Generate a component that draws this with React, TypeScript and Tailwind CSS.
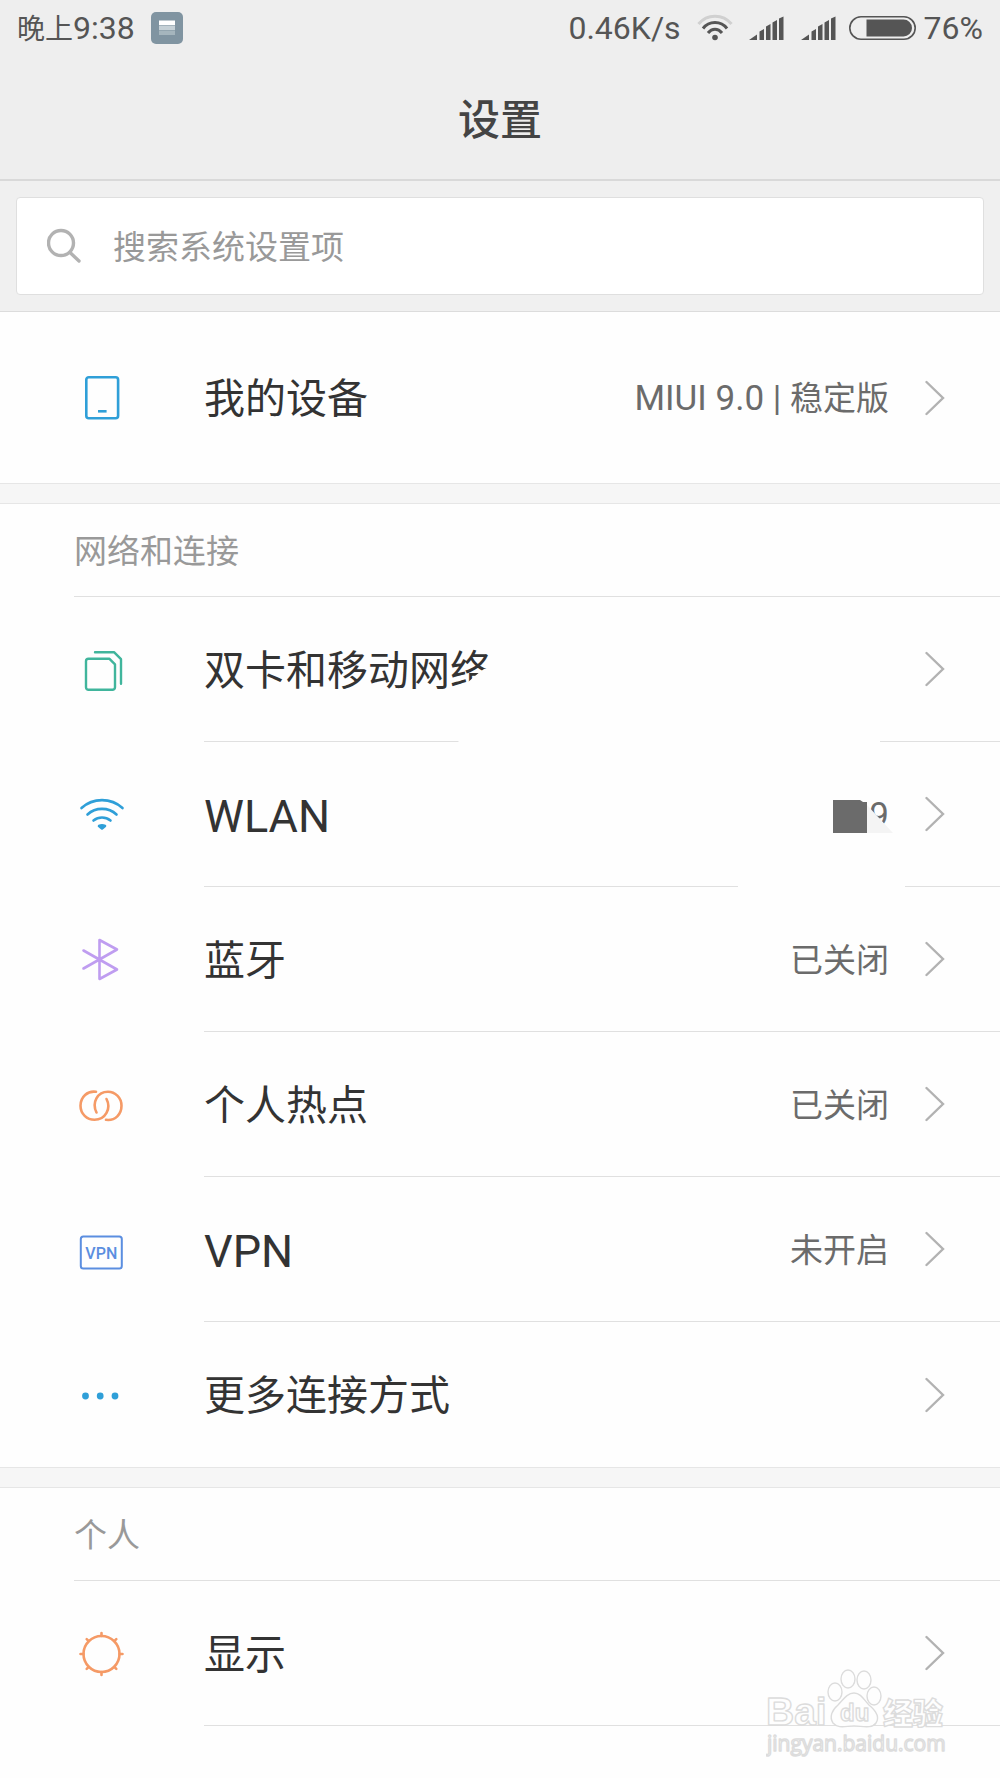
import React from 'react';

interface RowProps {
  icon: React.ReactNode;
  label: React.ReactNode;
  value?: React.ReactNode;
  last?: boolean;
  tall?: boolean;
}

const Chevron = () => (
  <svg className="w-5 h-9 shrink-0" viewBox="0 0 20 36" fill="none" stroke="#b2b2b2" strokeWidth="2.4" strokeLinecap="round">
    <path d="M1.5 2 L18 18 L1.5 34" />
  </svg>
);

const DeviceIcon = () => (
  <svg className="w-12 h-12" viewBox="0 0 48 48" fill="none" stroke="#2f9fd8" strokeWidth="2.6">
    <rect x="8.3" y="3.3" width="31.8" height="41" rx="2.5" />
    <path d="M20 37.3 h8.6" />
  </svg>
);

const SimIcon = () => (
  <svg className="w-12 h-12" viewBox="0 0 48 48" fill="none" stroke="#40b59c" strokeWidth="2.4" strokeLinecap="round" strokeLinejoin="round">
    <path d="M10.5 12.8 h21 l5.5 5.5 v23 a2.5 2.5 0 0 1 -2.5 2.5 h-24 a2.5 2.5 0 0 1 -2.5 -2.5 v-26 a2.5 2.5 0 0 1 2.5 -2.5 z" />
    <path d="M17 6.2 h19 l7 7 v24.5" />
  </svg>
);

const WlanIcon = () => (
  <svg className="w-12 h-12" viewBox="0 0 48 48" fill="none" stroke="#2f9fd8" strokeWidth="2.6" strokeLinecap="round">
    <path d="M3.5 17 C15 6.5 33 6.5 44.5 17" />
    <path d="M9.5 23.5 C17.5 16 30.5 16 38.5 23.5" />
    <path d="M15.5 29.5 C20.5 25.5 27.5 25.5 32.5 29.5" />
    <path d="M21 35 Q24 33.6 27 35 L24 37.5 Z" fill="#2f9fd8" strokeLinejoin="round" />
  </svg>
);

const BluetoothIcon = () => (
  <svg className="w-12 h-12" viewBox="0 0 48 48" fill="none" stroke="#bf9df0" strokeWidth="2.6" strokeLinecap="round" strokeLinejoin="round">
    <path d="M5.5 14.5 L39 33.5 L21.5 43 V4 L39 13.5 L5.5 32.5" />
  </svg>
);

const HotspotIcon = () => (
  <svg className="w-12 h-12" viewBox="0 0 48 48" fill="none" stroke="#f59a66" strokeWidth="2.6" strokeLinecap="round">
    <path d="M18 10.800 C9.500 9.500 2.500 16 2.500 24.800 C2.500 33 9 38.800 16.500 38.800 C27.500 38.800 33.500 27.500 28.500 18" />
    <path d="M28 38.800 C37.500 40 43.500 33 43.500 24.800 C43.500 16.500 37 10.800 30 10.800 C19.500 10.800 13.500 21.500 18.500 31.500" />
  </svg>
);

const VpnIcon = () => (
  <svg className="w-12 h-12" viewBox="0 0 48 48" fill="none">
    <rect x="2.8" y="10.5" width="41" height="32" rx="2.5" stroke="#5b8ee0" strokeWidth="2" />
    <text x="23.3" y="32.500" textAnchor="middle" fontSize="16" fontWeight="500" fontFamily="Roboto, sans-serif" fill="#5b8ee0">VPN</text>
  </svg>
);

const MoreIcon = () => (
  <svg className="w-12 h-12" viewBox="0 0 48 48" fill="#2f9fd8">
    <circle cx="7.500" cy="25" r="3.4" />
    <circle cx="22.2" cy="25" r="3.4" />
    <circle cx="37" cy="25" r="3.4" />
  </svg>
);

const DisplayIcon = () => (
  <svg className="w-12 h-12" viewBox="0 0 48 48" fill="none" stroke="#f59a66" strokeWidth="2.6" strokeLinecap="round">
    <circle cx="23.5" cy="24" r="18" />
    <path d="M23.5 3 v3 M23.5 42 v3 M2.5 24 h3 M41.5 24 h3 M8.7 9.2 l2 2 M36.3 36.8 l2 2 M38.3 9.2 l-2 2 M10.7 36.8 l-2 2" />
  </svg>
);

const SignalIcon = () => (
  <svg className="w-9 h-6" viewBox="0 0 36 24" fill="#555">
    <path d="M0 24 L8 18.5 V24 Z M10.5 24 V15.5 L15 13 V24 Z M17 24 V10.5 L21.5 8 V24 Z M23.5 24 V6.5 L28 4 V24 Z M30 24 V2.5 L34.5 0.5 V24 Z" />
  </svg>
);

const StatusBar = () => (
  <div className="flex items-center justify-between h-14 px-[17px] text-[32px] text-[#555]">
    <div className="flex items-center">
      <span><span className="text-[28px]">晚上</span>9:38</span>
      <svg className="ml-4 w-8 h-8" viewBox="0 0 32 32">
        <rect width="32" height="32" rx="5" fill="#8094a1" />
        <rect x="8" y="8.5" width="16" height="4.5" fill="#fff" />
        <rect x="8" y="13.5" width="16" height="4.5" fill="#c5d0d6" />
        <rect x="8" y="18.5" width="16" height="4.5" fill="#a5b5bd" />
      </svg>
    </div>
    <div className="flex items-center">
      <span>0.46K/s</span>
      <svg className="ml-4 w-9 h-7" viewBox="0 0 36 28" fill="none" stroke="#555" strokeWidth="3">
        <path d="M1.5 10 C10 -0.5 26 -0.5 34.5 10" stroke="#d0d0d0" />
        <path d="M6 14.5 C12 6.5 24 6.5 30 14.5" />
        <path d="M11 19 C15 14 21 14 25 19" />
        <circle cx="18" cy="23.5" r="2.8" fill="#555" stroke="none" />
      </svg>
      <span className="ml-4"><SignalIcon /></span>
      <span className="ml-4"><SignalIcon /></span>
      <svg className="ml-3 w-[67px] h-6" viewBox="0 0 67 24">
        <rect x="0.8" y="0.8" width="65.4" height="22.4" rx="11.2" fill="none" stroke="#555" strokeWidth="1.6" />
        <path d="M17.5 3.5 h37 a8.5 8.5 0 0 1 0 17 h-37 z" fill="#555" />
      </svg>
      <span className="ml-2">76%</span>
    </div>
  </div>
);

// latin text runs a little larger than the chinese around it
const LatinLabel: React.FC<{ children: React.ReactNode }> = ({ children }) => (
  <span className="text-[45px]">{children}</span>
);

const LatinValue: React.FC<{ children: React.ReactNode }> = ({ children }) => (
  <span className="text-[35px]">{children}</span>
);

const Row: React.FC<RowProps> = (props) => {
  const { icon, label, value, last, tall } = props;

  return (
    <li>
      <a href="#" className={`flex items-stretch pl-[78px] ${tall ? 'h-[171px]' : 'h-[145px]'}`}>
        <span className="flex items-center w-[126px]">{icon}</span>
        <span className={`flex flex-1 items-center pr-[55px] ${last ? '' : 'border-b border-[#e0e0e0]'}`}>
          <span className="flex-1 pt-1 text-[41px] text-[#333]">{label}</span>
          <span className="mr-9 pt-0.5 text-[33px] text-[#6b6b6b]">{value}</span>
          <Chevron />
        </span>
      </a>
    </li>
  );
};

const SectionTitle: React.FC<{ children: React.ReactNode }> = ({ children }) => (
  <h2 className="flex items-center h-[93px] pt-0.5 ml-[74px] border-b border-[#e0e0e0] text-[33px] text-[#999]">{children}</h2>
);

const Band = () => <div className="h-[21px] bg-[#f6f6f6] border-y border-[#e6e6e6]" />;

// network name with most of it painted over
const HiddenSsid = () => (
  <span className="relative z-10 block w-14 text-right">
    <LatinValue>9</LatinValue>
    <svg className="absolute left-0 top-1/2 -translate-y-1/2 w-[60px] h-10" viewBox="0 0 60 40">
      <path d="M34 10 L60 38 H34 Z" fill="#f4f4f4" />
      <path d="M0 5 H27 L30 7 H34 V38 H0 Z" fill="#6b6b6b" />
    </svg>
  </span>
);

// white brush marks lying over the first two rows
const Smudges = () => (
  <>
    <svg className="absolute left-[450px] top-[60px] w-[430px] h-[100px]" viewBox="0 0 430 100" fill="#fefefe">
      <path d="M10 100 L8 80 C2 55 2 42 12 31 Q24 19 34 12 H430 V100 Z" />
    </svg>
    <div className="absolute right-[95px] top-[280px] w-[167px] h-4 bg-[#fefefe]" />
  </>
);

const Watermark = () => (
  <div className="absolute right-[50px] bottom-4 w-[184px]">
    <svg className="w-full" viewBox="0 0 184 98" fill="#fefefe" stroke="#dcdcdc" strokeWidth="1.4" strokeLinejoin="round">
      <text x="0" y="61" fontSize="39" fontWeight="700" fontFamily="'Liberation Sans', sans-serif">Bai</text>
      <ellipse cx="69" cy="28" rx="7" ry="9" />
      <ellipse cx="82" cy="15" rx="7" ry="9" />
      <ellipse cx="98" cy="16" rx="7" ry="9" />
      <ellipse cx="108" cy="32" rx="7" ry="9" />
      <path d="M88 29 C95 29 98 36 103 41 C109 46 114 53 110 59 C106 65 96 62 88 62 C80 62 72 65 67 59 C63 53 66 46 72 41 C77 36 81 29 88 29 Z" />
      <text x="74" y="57" fontSize="24" fontWeight="700" fontFamily="'Liberation Sans', sans-serif">du</text>
      <text x="117" y="60" fontSize="30" fontWeight="900" fontFamily="'Noto Sans CJK SC', sans-serif">经验</text>
      <text x="1" y="87" fontSize="21" fontFamily="'Open Sans', sans-serif">jingyan.baidu.com</text>
    </svg>
  </div>
);

export default function App() {
  return (
    <div className="relative min-h-screen overflow-hidden bg-[#fefefe] font-[Roboto,'Noto_Sans_CJK_SC',sans-serif] font-normal leading-none">
      <header className="bg-[#eee] border-b-2 border-[#d9d9d9]">
        <StatusBar />
        <h1 className="flex items-center justify-center h-[123px] pt-1.5 text-[42px] font-medium text-[#444]">设置</h1>
      </header>
      <div className="p-4 bg-[#f0f0f0] border-b border-[#dcdcdc]">
        <label className="flex items-center h-[98px] pl-[30px] bg-white border border-[#dfdfdf] rounded">
          <svg className="w-9 h-9" viewBox="0 0 36 36" fill="none" stroke="#b2b2b2" strokeWidth="3.4" strokeLinecap="round">
            <circle cx="14" cy="15" r="12.5" />
            <path d="M23 24.5 L32 33" />
          </svg>
          <input
            type="text"
            aria-label="搜索系统设置项"
            placeholder="搜索系统设置项"
            className="flex-1 ml-[30px] h-full pt-0.5 text-[33px] outline-none placeholder:text-[#999]"
          />
        </label>
      </div>
      <ul>
        <Row icon={<DeviceIcon />} label="我的设备" value={<><LatinValue>MIUI 9.0 | </LatinValue>稳定版</>} last tall />
      </ul>
      <Band />
      <SectionTitle>网络和连接</SectionTitle>
      <ul className="relative">
        <Row icon={<SimIcon />} label="双卡和移动网络" />
        <Row icon={<WlanIcon />} label={<LatinLabel>WLAN</LatinLabel>} value={<HiddenSsid />} />
        <Row icon={<BluetoothIcon />} label="蓝牙" value="已关闭" />
        <Row icon={<HotspotIcon />} label="个人热点" value="已关闭" />
        <Row icon={<VpnIcon />} label={<LatinLabel>VPN</LatinLabel>} value="未开启" />
        <Row icon={<MoreIcon />} label="更多连接方式" last />
        <Smudges />
      </ul>
      <Band />
      <SectionTitle>个人</SectionTitle>
      <ul>
        <Row icon={<DisplayIcon />} label="显示" />
      </ul>
      <Watermark />
    </div>
  );
}
